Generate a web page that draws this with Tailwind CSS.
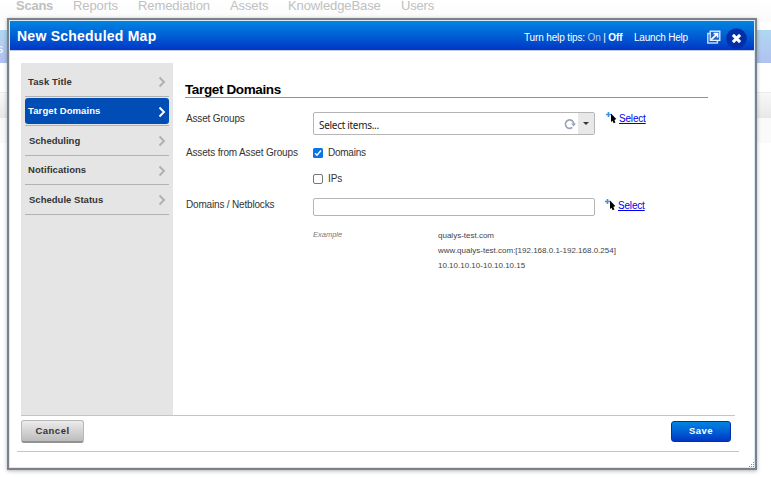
<!DOCTYPE html>
<html lang="en">
<head>
<meta charset="utf-8">
<title>New Scheduled Map</title>
<script src="https://cdn.jsdelivr.net/npm/@tailwindcss/browser@4"></script>
</head>
<body class="relative h-[478px] w-[771px] overflow-hidden bg-white font-['Liberation_Sans',Arial,sans-serif] text-[10px] text-[#333]">
<svg class="hidden">
  <symbol id="chev" viewBox="0 0 8 12"><path d="M1.5 1.5 L6 6 L1.5 10.5" fill="none" stroke="currentColor" stroke-width="1.9"/></symbol>
  <symbol id="pick" viewBox="0 0 11 12"><path d="M0 2.5h5M2.5 0v5" stroke="#3f93dc" stroke-width="1.6"/><path d="M5 1.5 L5 10 L6.5 8.8 L7.6 11.2 L9.4 10.4 L8.4 8 L10.3 7 Z" fill="#000"/></symbol>
</svg>

<!-- Dimmed application behind the dialog -->
<nav class="flex h-[22px] bg-linear-to-b from-white to-[#fafafa] pl-[16px] text-[13px] leading-[11px] whitespace-nowrap text-[#c0c0c0]">
  <b class="w-[57px] tracking-[-0.25px]">Scans</b>
  <span class="w-[65px] tracking-[-0.1px]">Reports</span>
  <span class="w-[92px] tracking-[-0.1px]">Remediation</span>
  <span class="w-[58px] tracking-[-0.1px]">Assets</span>
  <span class="w-[113px] tracking-[-0.1px]">KnowledgeBase</span>
  <span class="tracking-[-0.2px]">Users</span>
</nav>
<div class="h-2 bg-white"></div>
<div class="h-[33px] bg-linear-to-b from-[#afd8f3] to-[#b1c1ee] text-[12px] leading-[38px] text-white"><span class="-ml-[3px]">s</span></div>
<div class="h-[29px] bg-white"></div>
<div class="h-[26px] border-t border-[#ececec] bg-linear-to-b from-[#f8f8f8] to-[#e8e8e8]"></div>
<div class="h-[25px] bg-[#fafafa]"></div>

<!-- Dialog -->
<section class="absolute top-[18px] left-[7px] flex h-[452px] w-[750px] flex-col border-2 border-[#7b8188] bg-white shadow-[0_1px_4px_rgba(0,0,0,0.3)]">
  <div class="flex flex-1 flex-col border border-[#d9e8f4]">
    <header class="flex h-[30px] items-center border-b border-[#c5ccda] bg-linear-to-b from-[#0084e2] to-[#0035c5] pl-[7px] whitespace-nowrap text-white">
      <h1 class="w-[507px] pt-[2px] text-[14px] leading-[29px] font-bold tracking-[0.24px]">New Scheduled Map</h1>
      <span class="w-[110px] pt-[4px] tracking-[-0.14px]">Turn help tips: <span class="text-[#bccbee]">On</span> | <b>Off</b></span>
      <span class="w-[73px] pt-[4px] tracking-[-0.2px]">Launch Help</span>
      <svg class="mt-[3px] h-[14px] w-[14px]" viewBox="0 0 14 14"><path d="M3 3.5H.8v9.4h9.6v-2" fill="none" stroke="#b8dbff" stroke-width="1.5"/><rect x="3.2" y="1.2" width="9.6" height="9.2" fill="#1c64cc" stroke="#e4f0ff" stroke-width="1.3"/><path d="M4.2 9.6L10.4 3.6M6.6 3.6h4V7.6" fill="none" stroke="#fff" stroke-width="1.7"/></svg>
      <svg class="mt-[5px] ml-[5px] h-[21px] w-[21px]" viewBox="0 0 21 21"><circle cx="10.5" cy="10.5" r="10.3" fill="#022ea8"/><path d="M6.9 6.9l7.2 7.2M14.1 6.9l-7.2 7.2" stroke="#fff" stroke-width="3"/></svg>
    </header>

    <div class="ml-[11px] flex h-[365px] w-[714px] border-b border-[#c4c4c4] pt-[12px]">
      <aside class="w-[152px] bg-[#e5e5e5] px-1 text-[9.5px] font-bold whitespace-nowrap">
        <div class="flex h-[34px] items-center justify-between border-b border-[#b2b2b2] pt-[5px] pr-[3px] pl-[3px]"><span class="tracking-[0.1px]">Task Title</span><svg class="h-3 w-2 text-[#b0b0b0]"><use href="#chev"/></svg></div>
        <div class="flex h-[29px] flex-col border-b border-[#b2b2b2] pt-px"><div class="flex h-[26px] items-center justify-between rounded-[3px] bg-[#004db5] pr-[3px] pl-[3px] text-white"><span class="tracking-[0.1px]">Target Domains</span><svg class="mt-[2px] h-3 w-2"><use href="#chev"/></svg></div></div>
        <div class="flex h-[30px] items-center justify-between border-b border-[#b2b2b2] pt-px pr-[3px] pl-1"><span>Scheduling</span><svg class="h-3 w-2 text-[#b0b0b0]"><use href="#chev"/></svg></div>
        <div class="flex h-[29px] items-center justify-between border-b border-[#b2b2b2] pr-[3px] pl-[3px]"><span class="tracking-[0.05px]">Notifications</span><svg class="mt-[2px] h-3 w-2 text-[#b0b0b0]"><use href="#chev"/></svg></div>
        <div class="flex h-[30px] items-center justify-between border-b border-[#b2b2b2] pt-px pr-[3px] pl-1"><span class="tracking-[0.02px]">Schedule Status</span><svg class="h-3 w-2 text-[#b0b0b0]"><use href="#chev"/></svg></div>
      </aside>

      <main class="ml-[12px] flex w-[523px] flex-col pt-[17px] whitespace-nowrap">
        <h2 class="h-[18px] border-b border-[#929292] text-[13.5px] leading-[19px] font-bold tracking-[-0.37px] text-black">Target Domains</h2>
        <div class="mt-[14px] flex h-[23px] pl-[1px]">
          <label class="w-[127px] leading-[13px] tracking-[-0.16px]">Asset Groups</label>
          <div class="flex h-[23px] w-[282px] items-center overflow-hidden rounded-[2px] border border-[#b5b5b5] pl-[5px]">
            <span class="flex-1 pt-[3px] font-['Noto_Sans',sans-serif] text-[10px] tracking-[-0.3px] text-[#222]">Select items...</span>
            <svg class="mr-[2px] h-3 w-3" viewBox="0 0 12 12"><path d="M8.3 9.4A4.2 4.2 0 1 1 9.8 6" fill="none" stroke="#99a5ba" stroke-width="1.7"/><path d="M7 5.6h5L9.6 8.4z" fill="#99a5ba"/></svg>
            <span class="flex h-full w-[16px] items-center justify-center bg-[#e8e8e8]"><svg class="h-[3px] w-[6px]" viewBox="0 0 6 3"><path d="M0 0h6L3 3z" fill="#333"/></svg></span>
          </div>
          <svg class="ml-[11px] h-3 w-[11px]"><use href="#pick"/></svg>
          <a class="ml-[2px] leading-[13px] tracking-[-0.18px] text-[#00e] underline">Select</a>
        </div>
        <div class="mt-[11px] flex h-[13px] items-center pl-[1px]">
          <label class="w-[127px] tracking-[-0.16px]">Assets from Asset Groups</label>
          <svg class="h-[10px] w-[10px]" viewBox="0 0 10 10"><rect width="10" height="10" rx="1.5" fill="#0875e8"/><path d="M2 5.2l2 2 4-4.7" fill="none" stroke="#fff" stroke-width="1.5"/></svg>
          <span class="ml-[5px] tracking-[-0.25px]">Domains</span>
        </div>
        <div class="mt-[13px] flex h-[13px] items-center pl-[128px]">
          <span class="h-[10px] w-[10px] rounded-[2px] border border-[#777]"></span>
          <span class="ml-[5px] tracking-[-0.15px]">IPs</span>
        </div>
        <div class="mt-[13px] flex h-[18px] pl-[1px]">
          <label class="w-[127px] leading-[14px] tracking-[-0.18px]">Domains / Netblocks</label>
          <div class="h-[18px] w-[282px] rounded-[2px] border border-[#b5b5b5]"></div>
          <svg class="mt-[1px] ml-[10px] h-3 w-[11px]"><use href="#pick"/></svg>
          <a class="ml-[2px] pt-px leading-[13px] tracking-[-0.18px] text-[#00e] underline">Select</a>
        </div>
        <div class="mt-[12px] flex pl-[128px] text-[8px] leading-[15px] text-[#444]">
          <i class="w-[125px] text-[7.5px] leading-[13px] text-[#777]">Example</i>
          <div><p>qualys-test.com</p><p>www.qualys-test.com:[192.168.0.1-192.168.0.254]</p><p>10.10.10.10-10.10.10.15</p></div>
        </div>
      </main>
    </div>

    <footer class="mx-[7px] flex h-[36px] w-[722px] justify-between border-b border-[#c4c4c4] pt-[4px] pr-[8px] pl-[4px] text-[9.5px] font-bold tracking-[0.5px]">
      <button class="h-[23px] w-[63px] rounded-[3px] border border-b-2 border-[#b8b8b8] border-b-[#929292] bg-linear-to-b from-[#ececec] to-[#bcbcbc] pt-px text-[#333]">Cancel</button>
      <button class="mt-px h-[21px] w-[60px] rounded-[3px] border border-[#0032a4] bg-linear-to-b from-[#0084e2] to-[#0035c5] text-white">Save</button>
    </footer>
    <div class="flex flex-1 items-end justify-end"><svg class="h-[5px] w-[5px]" viewBox="0 0 5 5"><path d="M4 0h1v1H4zM2 2h1v1H2zM4 2h1v1H4zM0 4h1v1H0zM2 4h1v1H2zM4 4h1v1H4z" fill="#8c8c8c"/></svg></div>
  </div>
</section>
</body>
</html>
